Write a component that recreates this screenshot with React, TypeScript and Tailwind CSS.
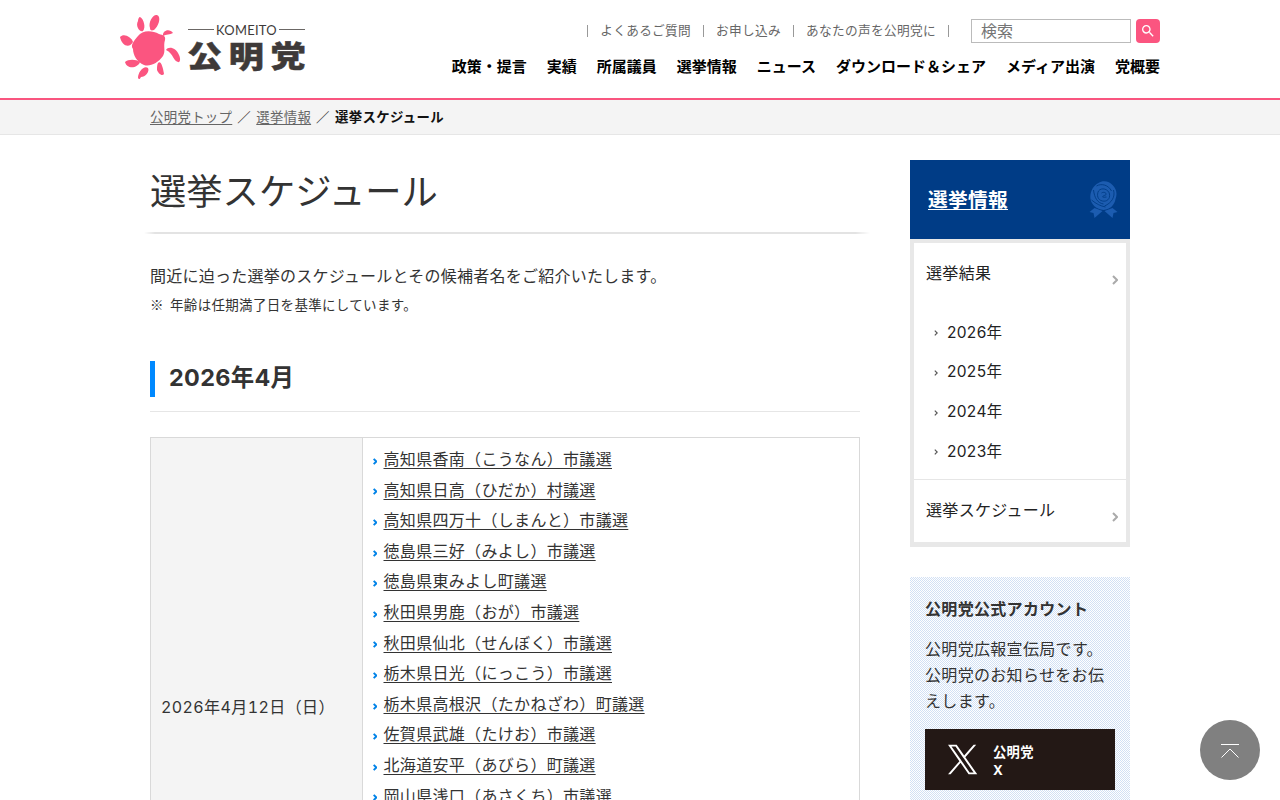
import { MdSearch } from "react-icons/md";

const subLinks = ["よくあるご質問", "お申し込み", "あなたの声を公明党に"];

const navLinks = [
  "政策・提言",
  "実績",
  "所属議員",
  "選挙情報",
  "ニュース",
  "ダウンロード＆シェア",
  "メディア出演",
  "党概要",
];

const elections = [
  "高知県香南（こうなん）市議選",
  "高知県日高（ひだか）村議選",
  "高知県四万十（しまんと）市議選",
  "徳島県三好（みよし）市議選",
  "徳島県東みよし町議選",
  "秋田県男鹿（おが）市議選",
  "秋田県仙北（せんぼく）市議選",
  "栃木県日光（にっこう）市議選",
  "栃木県高根沢（たかねざわ）町議選",
  "佐賀県武雄（たけお）市議選",
  "北海道安平（あびら）町議選",
  "岡山県浅口（あさくち）市議選",
];

const years = ["2026年", "2025年", "2024年", "2023年"];

function Logo() {
  return (
    <svg width="188" height="68" viewBox="0 0 188 68" className="block">
      <g fill="#fb5580">
        <path d="M18 23C22 17 32 17 39 21C43 22 46 23 45 27C43 33 46 38 43 43C38 50 30 54 24 52C17 49 13 42 13 36C10 32 14 28 18 23Z" />
        <path d="M30 15C28 9 33 1 37 2C42 4 38 14 34 17C31 18 30 17 30 15Z" />
        <path d="M20 4C24 6 26 15 23 18C20 20 15 13 18 8C18 6 19 4 20 4Z" />
        <path d="M0 24C4 20 11 24 13 29C10 35 2 34 0 24Z" />
        <path d="M5 49C8 46 16 46 20 49C18 55 7 57 5 49Z" />
        <path d="M18 65C18 59 24 52 28 55C30 59 25 64 21 64C20 66 19 67 18 65Z" />
        <path d="M38 50C41 47 43 55 44 61C42 64 38 60 37 57C37 54 37 52 38 50Z" />
        <path d="M46 37C48 33 56 34 59 42C61 46 60 50 58 49C53 48 54 41 46 37Z" />
        <path d="M43 23C42 17 50 15 53 20C50 22 46 21 43 23Z" />
      </g>
      <path d="M68 16.5H94M159 16.5H185" stroke="#6b6765" />
      <text
        x="96"
        y="21.5"
        textLength="61"
        lengthAdjust="spacingAndGlyphs"
        className="fill-[#3e3a39] font-[family-name:Lato] text-[14px]"
      >
        KOMEITO
      </text>
      <text
        x="57.2 93 128.6"
        y="54.5"
        transform="scale(1.17 1)"
        stroke="#3e3a39"
        strokeWidth="0.5"
        className="fill-[#3e3a39] font-[family-name:'Noto_Sans_CJK_JP'] text-[30px] font-black tracking-normal"
      >
        公明党
      </text>
    </svg>
  );
}

function Rosette() {
  return (
    <svg width="29" height="38" viewBox="0 0 28 38" className="block">
      <g fill="#1c5cb0">
        <path d="M5 27L0 31L4 32L5 37L13 30ZM23 27L28 31L24 32L23 37L15 30Z" />
        <path d="M9 2C13 -1 20 0 23 4C27 8 28 13 26 18C25 24 21 28 14 29C7 28 2 24 1 18C0 12 3 5 9 2Z" />
      </g>
      <g fill="none" stroke="#003c86" strokeWidth="0.9">
        <path d="M7 5C12 2 19 4 22 10M4 9C5 17 8 22 14 23M24 9C26 16 22 22 15 25M2 19C7 23 11 25 16 26" />
        <path d="M9 10C12 6 19 8 20 13C21 18 17 21 13 20C8 19 7 14 9 10Z" />
        <path d="M12 12C15 10 18 13 16 14C13 15 11 17 17 16" />
      </g>
    </svg>
  );
}

function Arrow({ className }: { className: string }) {
  return (
    <svg viewBox="0 0 6 10" className={className} fill="none" stroke="currentColor">
      <path d="M1 1L5 5L1 9" />
    </svg>
  );
}

function Header() {
  return (
    <header className="h-[100px] border-b-2 border-[#f9557f]">
      <div className="mx-auto flex w-[1040px] justify-between pt-[13px]">
        <Logo />
        <div className="flex flex-col items-end pt-[6px]">
          <div className="flex h-6 items-center">
            <ul className="flex h-3 items-center border-l border-[#999] text-[12.68px] leading-3 text-[#666]">
              {subLinks.map((link) => (
                <li key={link} className="border-r border-[#999] px-3">
                  {link}
                </li>
              ))}
            </ul>
            <div className="ml-[22px] flex h-6 w-40 items-center border border-[#bbb] pb-px pl-[9px] text-[16px] leading-5 tracking-normal text-[#757575]">
              検索
            </div>
            <button className="ml-[5px] flex size-6 items-center justify-center rounded bg-[#fb5580] text-white">
              <MdSearch size={16} />
            </button>
          </div>
          <nav className="mt-[13px] flex gap-5 text-[15px] leading-[22px] font-bold tracking-normal text-black">
            {navLinks.map((link) => (
              <a key={link}>{link}</a>
            ))}
          </nav>
        </div>
      </div>
    </header>
  );
}

function Breadcrumb() {
  return (
    <div className="h-[35px] border-b border-[#e6e6e6] bg-[#f4f4f4]">
      <div className="mx-auto flex w-[980px] items-center text-[13.4px] leading-[34px] text-[#666]">
        <a className="underline underline-offset-2">公明党トップ</a>
        <span className="w-6 pl-[5px] text-[#333]">／</span>
        <a className="underline underline-offset-2">選挙情報</a>
        <span className="w-6 pl-[5px] text-[#333]">／</span>
        <b className="text-[13.4px] text-[#111]">選挙スケジュール</b>
      </div>
    </div>
  );
}

function Schedule() {
  return (
    <main className="w-[710px]">
      <h1 className="mt-[6px] text-[36.3px] leading-[52px] tracking-normal">選挙スケジュール</h1>
      <div className="mt-[14px] -mr-[10px] -ml-[6px] h-[2px] bg-[#e3e3e3] [mask-image:linear-gradient(to_right,transparent,black_1.5%,black_98%,transparent)]" />
      <p className="mt-[29px] leading-[26px] tracking-[0.015em]">
        間近に迫った選挙のスケジュールとその候補者名をご紹介いたします。
      </p>
      <p className="mt-1 text-[13.5px] leading-[22px]">
        <span className="inline-block w-5 font-['Noto_Sans_CJK_JP']">※</span>
        年齢は任期満了日を基準にしています。
      </p>
      <div className="mt-[45px] border-b border-[#e6e6e6] pb-[14px]">
        <h2 className="h-9 border-l-5 border-[#0089ff] pl-[14px] text-[23.4px] leading-[34px] font-bold">
          2026年4月
        </h2>
      </div>
      <div className="mt-[25px] flex h-[540px] border border-[#d9d9d9]">
        <div className="flex w-[212px] items-center border-r border-[#d9d9d9] bg-[#f4f4f4] pl-[10px] tracking-[0.025em] tabular-nums">
          2026年4月12日（日）
        </div>
        <ul className="flex flex-col gap-[5px] pt-[9px] pl-[10px]">
          {elections.map((name) => (
            <li key={name} className="flex items-center leading-[25.6px]">
              <Arrow className="mt-[3px] mr-[6.5px] h-[7px] w-[4px] stroke-3 text-[#0083e8]" />
              <a className="underline underline-offset-3">{name}</a>
            </li>
          ))}
        </ul>
      </div>
    </main>
  );
}

function Sidebar() {
  return (
    <aside className="w-[220px]">
      <div className="flex h-[79px] items-center justify-between bg-[#003c86] pr-3 pl-[18px] text-white">
        <a className="pt-[2px] text-[19.7px] font-bold underline underline-offset-2">
          選挙情報
        </a>
        <Rosette />
      </div>
      <div className="h-[308px] border-4 border-b-5 border-[#e8e8e8] text-[#222]">
        <div className="flex h-[59px] items-center justify-between pr-2 pl-3">
          <a>選挙結果</a>
          <Arrow className="mt-[14px] h-[10px] w-[6px] stroke-2 text-[#aaa]" />
        </div>
        <ul className="h-[177px] pt-[10.5px] pl-5 text-[15.5px]">
          {years.map((year) => (
            <li key={year} className="flex h-[39.7px] items-center">
              <Arrow className="mt-[2px] mr-[9px] h-[6px] w-[4px] stroke-2 text-[#555]" />
              {year}
            </li>
          ))}
        </ul>
        <div className="flex h-[60px] items-center justify-between border-t border-[#e6e6e6] pr-2 pl-3">
          <a>選挙スケジュール</a>
          <Arrow className="mt-[14px] h-[10px] w-[6px] stroke-2 text-[#aaa]" />
        </div>
      </div>
      <section className="mt-[30px] h-[300px] bg-[repeating-conic-gradient(#d2e0f4_0_25%,#ffffff_0_50%)] bg-[length:2px_2px] px-[15px] pt-[19px]">
        <h3 className="leading-[26px] font-bold">公明党公式アカウント</h3>
        <p className="mt-[14px] w-[190px] leading-[26px]">
          公明党広報宣伝局です。
          <br />
          公明党のお知らせをお伝
          <br />
          えします。
        </p>
        <a className="mt-[15px] flex h-[61px] items-center bg-[#231815] pl-[22px] text-[13.3px] leading-[18px] font-bold text-white">
          <svg viewBox="0 0 24 24" className="mr-[15px] h-[31px] w-[31px]" fill="white">
            <path d="M14.2 10.2 22.6 .5h-2l-7.3 8.4L7.5.5H.8l8.8 12.8L.8 23.5h2l7.7-9 6.2 9h6.7zm-2.7 3.1-.9-1.3L3.5 2h3.1l5.7 8.2.9 1.3 7.4 10.6h-3.1z" />
          </svg>
          <span className="pt-[2px]">
            公明党
            <br />X
          </span>
        </a>
      </section>
    </aside>
  );
}

export default function App() {
  return (
    <div className="relative h-[800px] overflow-hidden bg-white font-[Inter,'Noto_Sans_CJK_JP',sans-serif] text-[16px] tracking-[0.02em] text-[#333]">
      <Header />
      <Breadcrumb />
      <div className="mx-auto flex w-[980px] justify-between pt-[25px]">
        <Schedule />
        <Sidebar />
      </div>
      <button
        aria-label="ページの先頭へ"
        className="absolute right-5 bottom-5 flex size-[60px] items-center justify-center rounded-full bg-[#808080] text-white"
      >
        <svg width="18" height="16" viewBox="0 0 18 16" fill="none" stroke="currentColor">
          <path d="M0 2.5H18M.5 15.5L9 7L17.5 15.5" />
        </svg>
      </button>
    </div>
  );
}
